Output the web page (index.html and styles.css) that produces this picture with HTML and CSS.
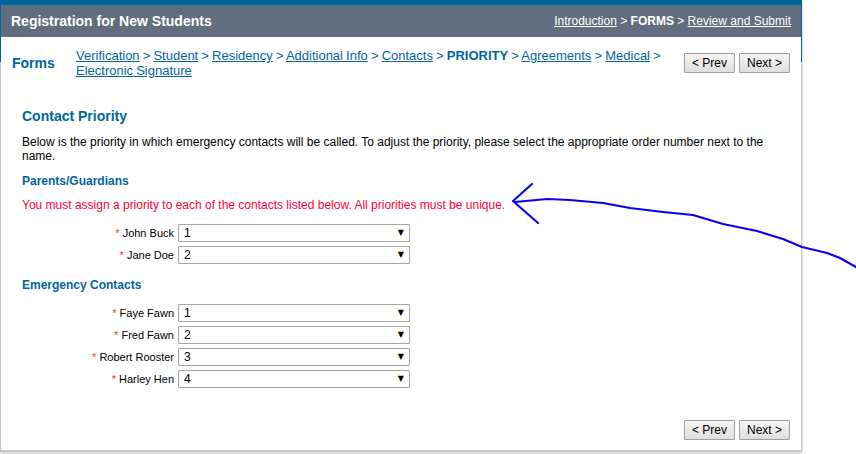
FILE: index.html
```html
<!DOCTYPE html>
<html lang="en">
<head>
    <meta charset="UTF-8">
    <meta name="viewport" content="width=device-width, initial-scale=1.0">
    <title>Registration for New Students</title>
    <link rel="stylesheet" href="styles.css">
</head>
<body>
    <div class="page">
        <div class="page-inner">
            <div class="header">
                <div class="header-title">Registration for New Students</div>
                <div class="header-steps">
                    <a href="#">Introduction</a> &gt; <b>FORMS</b> &gt; <a href="#">Review and Submit</a>
                </div>
            </div>

            <div class="subnav">
                <div class="subnav-title">Forms</div>
                <div class="subnav-links">
                    <a href="#">Verification</a> &gt; <a href="#">Student</a> &gt; <a href="#">Residency</a> &gt; <a href="#">Additional Info</a> &gt; <a href="#">Contacts</a> &gt; <span class="current">PRIORITY</span> &gt; <a href="#">Agreements</a> &gt; <a href="#">Medical</a> &gt; <a href="#">Electronic Signature</a>
                </div>
                <div class="pager">
                    <button class="btn">&lt; Prev</button>
                    <button class="btn">Next &gt;</button>
                </div>
            </div>

            <div class="content">
                <h1>Contact Priority</h1>
                <p class="intro">Below is the priority in which emergency contacts will be called. To adjust the priority, please select the appropriate order number next to the name.</p>

                <h2>Parents/Guardians</h2>
                <p class="error">You must assign a priority to each of the contacts listed below. All priorities must be unique.</p>
                <div class="rows rows-parents">
                    <div class="row">
                        <label><span class="req">*</span> John Buck</label>
                        <span class="select-wrap"><select><option>1</option></select></span>
                    </div>
                    <div class="row">
                        <label><span class="req">*</span> Jane Doe</label>
                        <span class="select-wrap"><select><option>2</option></select></span>
                    </div>
                </div>

                <h2>Emergency Contacts</h2>
                <div class="rows rows-emergency">
                    <div class="row">
                        <label><span class="req">*</span> Faye Fawn</label>
                        <span class="select-wrap"><select><option>1</option></select></span>
                    </div>
                    <div class="row">
                        <label><span class="req">*</span> Fred Fawn</label>
                        <span class="select-wrap"><select><option>2</option></select></span>
                    </div>
                    <div class="row">
                        <label><span class="req">*</span> Robert Rooster</label>
                        <span class="select-wrap"><select><option>3</option></select></span>
                    </div>
                    <div class="row">
                        <label><span class="req">*</span> Harley Hen</label>
                        <span class="select-wrap"><select><option>4</option></select></span>
                    </div>
                </div>

                <div class="pager pager-bottom">
                    <button class="btn">&lt; Prev</button>
                    <button class="btn">Next &gt;</button>
                </div>
            </div>
        </div>
    </div>

    <!-- hand drawn annotation on top of the screenshot -->
    <svg class="scribble" width="856" height="454" viewBox="0 0 856 454">
        <path d="M856 267 L840 258 L827 253 L802 247 L783 239 L757 231 L723 224 L693 215 L663 212 L630 208 L603 203 L570 200 L547 199 L515 202" />
        <path d="M532 184 L513 201 L538 223" />
    </svg>
</body>
</html>
```

FILE: styles.css
```css
/* Global Styles */
html, body {
    height: 100%;
}

body {
    margin: 0;
    font-family: "Liberation Sans", Arial, sans-serif;
    font-size: 12px;
    background-color: #FFFFFF;
    color: #000000;
    overflow: hidden;
}

a {
    color: inherit;
}

/* Page frame */
.page {
    width: 800px;
    height: 445px;
    padding: 5px 1px 2px 1px;
    background: linear-gradient(to bottom, #00669C 62px, #C8C8C8 62px);
    box-shadow: 0 1px 3px rgba(0, 0, 0, 0.25);
}

.page-inner {
    height: 100%;
    background: #FFFFFF;
    display: flex;
    flex-direction: column;
}

/* Header */
.header {
    display: flex;
    justify-content: space-between;
    align-items: center;
    height: 32px;
    padding: 0 10px;
    background-color: #626E80;
    color: #FFFFFF;
}

.header-title {
    font-size: 14px;
    font-weight: bold;
}

/* Sub navigation */
.subnav {
    display: flex;
    align-items: flex-start;
    padding: 11px 11px 0 11px;
    color: #00669C;
}

.subnav-title {
    width: 64px;
    flex: none;
    margin-top: 7px;
    font-size: 14px;
    font-weight: bold;
}

.subnav-links {
    width: 595px;
    flex: none;
    font-size: 13px;
    line-height: 15px;
    word-spacing: -0.5px;
}

.current {
    font-weight: bold;
}

.pager {
    display: flex;
    gap: 4px;
    margin-left: auto;
}

.subnav .pager {
    margin-top: 5px;
}

.btn {
    width: 51px;
    height: 20px;
    padding: 0;
    font-family: inherit;
    font-size: 12px;
    color: #000000;
    background: linear-gradient(to bottom, #F6F6F6, #DEDEDE);
    border: 1px solid #A0A0A0;
    border-radius: 1px;
}

/* Content */
.content {
    flex: 1;
    display: flex;
    flex-direction: column;
    padding: 0 11px 10px 21px;
}

h1 {
    margin: 30px 0 0;
    font-size: 14px;
    line-height: 16px;
    color: #00669C;
}

.intro {
    margin: 11px 0 0;
    line-height: 14px;
    font-size: 12px;
}

h2 {
    margin: 10px 0 0;
    font-size: 12px;
    line-height: 16px;
    color: #00669C;
}

.error {
    margin: 9px 0 0;
    line-height: 15px;
    color: #FF0033;
}

.rows {
    display: flex;
    flex-direction: column;
    gap: 4px;
}

.rows-parents {
    margin: 11px 0 3px;
}

.rows-emergency {
    margin-top: 11px;
}

.row {
    display: flex;
    align-items: center;
    gap: 4px;
}

.row label {
    width: 152px;
    text-align: right;
    font-size: 11px;
}

.req {
    color: #FF3030;
}

.select-wrap {
    position: relative;
    width: 232px;
    height: 18px;
}

.select-wrap::after {
    content: "\25BC";
    position: absolute;
    top: 2px;
    right: 6px;
    font-family: "DejaVu Sans", sans-serif;
    font-size: 8px;
    line-height: 14px;
    pointer-events: none;
}

select {
    appearance: none;
    display: block;
    width: 100%;
    height: 100%;
    margin: 0;
    padding: 0 0 0 5px;
    font-family: inherit;
    font-size: 12px;
    color: #000000;
    background: #FFFFFF;
    border: 1px solid #A6A6A6;
    border-radius: 1px;
}

.pager-bottom {
    margin-top: auto;
}

/* Annotation */
.scribble {
    position: absolute;
    top: 0;
    left: 0;
    pointer-events: none;
}

.scribble path {
    fill: none;
    stroke: #0404EC;
    stroke-width: 2.2;
    stroke-linecap: round;
    stroke-linejoin: round;
}
```
